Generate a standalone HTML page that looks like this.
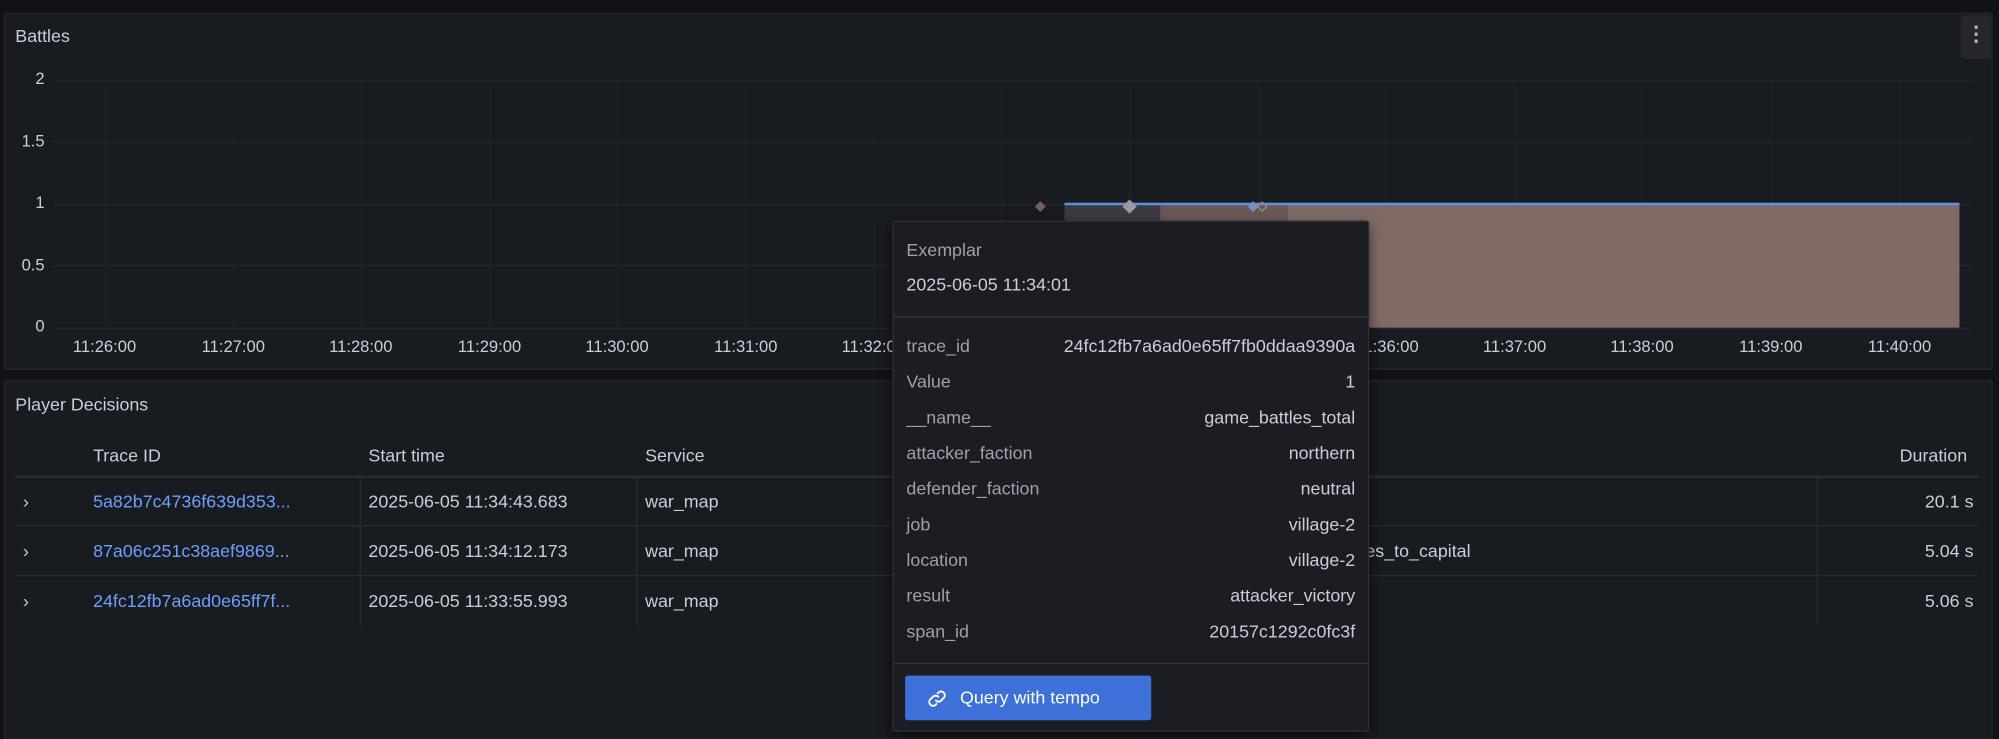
<!DOCTYPE html>
<html><head><meta charset="utf-8"><style>
*{box-sizing:border-box;margin:0;padding:0}
body{width:1999px;height:735px;overflow:hidden;background:#111217;font-family:"Liberation Sans",sans-serif;color:#ccccdc}
#w{position:absolute;left:0;top:0;width:1568px;height:577px;transform:scale(1.27487);transform-origin:0 0}
.a{position:absolute;white-space:nowrap}
.panel{position:absolute;background:#181b1f;border:1px solid #25272d;border-radius:2px}
.t{font-size:14px;color:#ccccdc}
.yl{position:absolute;right:1533px;font-size:13px;color:#ccccdc;transform:translateY(-8px)}
.xl{position:absolute;top:264px;font-size:13px;transform:translateX(-50%)}
.hg{position:absolute;left:42px;width:1506px;height:1px;background:#24262b}
.vg{position:absolute;top:62px;height:195px;width:1px;background:#202227}
.row{position:absolute;left:12px;width:1540px;height:39px;border-bottom:1px solid #2a2c32}
.vs{position:absolute;width:1px;background:#2a2c32}
.lk{color:#6e9fff}
.tt .k{position:absolute;left:10px;color:#9fa0ab;font-size:14px}
.tt .v{position:absolute;right:10px;color:#ccccdc;font-size:14px}
</style></head><body><div id="w">
<div class="panel" style="left:3px;top:10px;width:1560px;height:280px"></div>
<div class="a t" style="left:12px;top:20px">Battles</div>
<div class="a" style="left:1538px;top:12px;width:24px;height:34px;background:#25272d;border-radius:3px;color:#bbb;font-size:16px;text-align:center;line-height:32px;font-weight:bold">⋮</div>
<div class="hg" style="top:63px"></div><div class="hg" style="top:111px"></div><div class="hg" style="top:160px"></div><div class="hg" style="top:208px"></div><div class="hg" style="top:257px"></div>
<div class="yl" style="top:62px">2</div><div class="yl" style="top:111px">1.5</div><div class="yl" style="top:159px">1</div><div class="yl" style="top:208px">0.5</div><div class="yl" style="top:256px">0</div>
<div class="vg" style="left:82px"></div><div class="vg" style="left:183px"></div><div class="vg" style="left:283px"></div><div class="vg" style="left:384px"></div><div class="vg" style="left:484px"></div><div class="vg" style="left:585px"></div><div class="vg" style="left:685px"></div><div class="vg" style="left:786px"></div><div class="vg" style="left:886px"></div><div class="vg" style="left:987px"></div><div class="vg" style="left:1087px"></div><div class="vg" style="left:1188px"></div><div class="vg" style="left:1288px"></div><div class="vg" style="left:1389px"></div><div class="vg" style="left:1490px"></div>
<div class="a" style="left:835px;top:160px;width:75px;height:97px;background:#3a3a42"></div>
<div class="a" style="left:910px;top:160px;width:100px;height:97px;background:#6a5856"></div>
<div class="a" style="left:1010px;top:160px;width:527px;height:97px;background:#7f6a65"></div>
<div class="a" style="left:835px;top:159px;width:702px;height:2px;background:#5f8fe0"></div>
<div class="a" style="left:813px;top:159px;width:6px;height:6px;background:#7a5e5a;transform:rotate(45deg)"></div>
<div class="a" style="left:882px;top:158px;width:8px;height:8px;background:#9a9aa2;transform:rotate(45deg)"></div>
<div class="a" style="left:980px;top:159px;width:6px;height:6px;background:#7a8ec0;transform:rotate(45deg)"></div>
<div class="a" style="left:987px;top:159px;width:6px;height:6px;border:1px solid #a08a80;transform:rotate(45deg)"></div>
<div class="xl" style="left:82px">11:26:00</div><div class="xl" style="left:183px">11:27:00</div><div class="xl" style="left:283px">11:28:00</div><div class="xl" style="left:384px">11:29:00</div><div class="xl" style="left:484px">11:30:00</div><div class="xl" style="left:585px">11:31:00</div><div class="xl" style="left:685px">11:32:00</div><div class="xl" style="left:1088px">11:36:00</div><div class="xl" style="left:1188px">11:37:00</div><div class="xl" style="left:1288px">11:38:00</div><div class="xl" style="left:1389px">11:39:00</div><div class="xl" style="left:1490px">11:40:00</div>

<div class="panel" style="left:3px;top:298px;width:1560px;height:282px"></div>
<div class="a t" style="left:12px;top:309px">Player Decisions</div>
<div class="a t" style="left:73px;top:349px">Trace ID</div>
<div class="a t" style="left:289px;top:349px">Start time</div>
<div class="a t" style="left:506px;top:349px">Service</div>
<div class="a t" style="right:25px;top:349px">Duration</div>
<div class="a" style="left:12px;top:373px;width:1540px;height:2px;background:#2a2c32"></div>
<div class="row" style="top:374px"></div><div class="row" style="top:413px"></div>
<div class="vs" style="left:282px;top:374px;height:117px"></div><div class="vs" style="left:499px;top:374px;height:117px"></div><div class="vs" style="left:1425px;top:374px;height:117px"></div>
<div class="a t" style="left:18px;top:385px">›</div><div class="a t" style="left:18px;top:424px">›</div><div class="a t" style="left:18px;top:463px">›</div>
<div class="a t lk" style="left:73px;top:385px">5a82b7c4736f639d353...</div>
<div class="a t lk" style="left:73px;top:424px">87a06c251c38aef9869...</div>
<div class="a t lk" style="left:73px;top:463px">24fc12fb7a6ad0e65ff7f...</div>
<div class="a t" style="left:289px;top:385px">2025-06-05 11:34:43.683</div>
<div class="a t" style="left:289px;top:424px">2025-06-05 11:34:12.173</div>
<div class="a t" style="left:289px;top:463px">2025-06-05 11:33:55.993</div>
<div class="a t" style="left:506px;top:385px">war_map</div><div class="a t" style="left:506px;top:424px">war_map</div><div class="a t" style="left:506px;top:463px">war_map</div>
<div class="a t" style="left:1071px;top:424px">es_to_capital</div>
<div class="a t" style="right:20px;top:385px">20.1 s</div><div class="a t" style="right:20px;top:424px">5.04 s</div><div class="a t" style="right:20px;top:463px">5.06 s</div>

<div class="a tt" style="left:700px;top:173px;width:374px;height:401px;background:#1c1d22;border:1px solid #2f3037;border-radius:2px;box-shadow:0 4px 10px rgba(0,0,0,.5)">
<div class="k" style="top:14px">Exemplar</div>
<div class="k" style="top:41px;color:#ccccdc">2025-06-05 11:34:01</div>
<div class="a" style="left:0;top:74px;width:372px;height:1px;background:#34353c"></div>
<div class="k" style="top:89px">trace_id</div><div class="v" style="top:89px">24fc12fb7a6ad0e65ff7fb0ddaa9390a</div>
<div class="k" style="top:117px">Value</div><div class="v" style="top:117px">1</div>
<div class="k" style="top:145px">__name__</div><div class="v" style="top:145px">game_battles_total</div>
<div class="k" style="top:173px">attacker_faction</div><div class="v" style="top:173px">northern</div>
<div class="k" style="top:201px">defender_faction</div><div class="v" style="top:201px">neutral</div>
<div class="k" style="top:229px">job</div><div class="v" style="top:229px">village-2</div>
<div class="k" style="top:257px">location</div><div class="v" style="top:257px">village-2</div>
<div class="k" style="top:285px">result</div><div class="v" style="top:285px">attacker_victory</div>
<div class="k" style="top:313px">span_id</div><div class="v" style="top:313px">20157c1292c0fc3f</div>
<div class="a" style="left:0;top:346px;width:372px;height:1px;background:#34353c"></div>
<div class="a" style="left:9px;top:356px;width:193px;height:35px;background:#3d71d9;border-radius:2px;color:#fff;font-size:14px;line-height:35px;padding-left:43px">Query with tempo</div>
<svg class="a" style="left:26px;top:366px" width="16" height="16" viewBox="0 0 16 16" fill="none" stroke="#fff" stroke-width="1.5" stroke-linecap="round"><path d="M7 9.5a3 3 0 0 0 4.2 0l2.3-2.3a3 3 0 0 0-4.2-4.2L8.5 3.8"/><path d="M9 6.5a3 3 0 0 0-4.2 0L2.5 8.8a3 3 0 0 0 4.2 4.2l.8-.8"/></svg>
</div>
</div></body></html>
